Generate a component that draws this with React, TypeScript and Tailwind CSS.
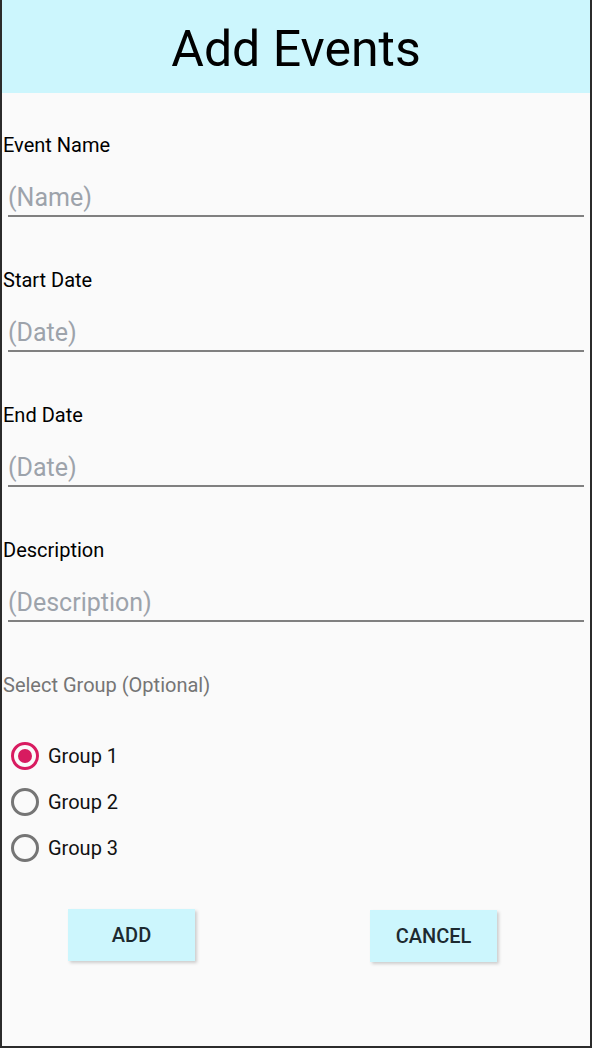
const fields = [
  { label: "Event Name", placeholder: "(Name)" },
  { label: "Start Date", placeholder: "(Date)" },
  { label: "End Date", placeholder: "(Date)" },
  { label: "Description", placeholder: "(Description)" },
];

const groups = ["Group 1", "Group 2", "Group 3"];

export default function App() {
  return (
    <div className="w-[592px] h-[1048px] flex flex-col bg-[#fafafa] border-x-2 border-b-2 border-[#2b2b2b] font-['Roboto',sans-serif] overflow-hidden">
      <div className="h-[93px] shrink-0 bg-[#ccf6fd] flex items-center justify-center">
        <h1 className="text-[50px] leading-none text-black mt-[4px]">Add Events</h1>
      </div>

      <div className="flex flex-col pt-[40px]">
        {fields.map(({ label, placeholder }) => (
          <div key={label} className="flex flex-col h-[135px]">
            <label className="pl-[1px] text-[20px] leading-[24px] text-black">{label}</label>
            <input
              placeholder={placeholder}
              className="mt-[24px] mx-[6px] h-[36px] pb-[2px] text-[25px] leading-[32px] bg-transparent border-b-2 border-[#808080] outline-none placeholder:text-[#9da3ab]"
            />
          </div>
        ))}

        <p className="pl-[1px] text-[20px] leading-[24px] text-[#757575]">Select Group (Optional)</p>

        <div className="flex flex-col mt-[36px]">
          {groups.map((g, i) => (
            <label key={g} className="flex items-center h-[46px] pl-[9px] gap-[9px]">
              <span
                className={
                  i === 0
                    ? "size-[28px] rounded-full border-[3px] border-[#d81b60] flex items-center justify-center"
                    : "size-[28px] rounded-full border-[3px] border-[#757575]"
                }
              >
                {i === 0 && <span className="size-[14px] rounded-full bg-[#d81b60]" />}
              </span>
              <span className="text-[20px] leading-[24px] text-[#111]">{g}</span>
            </label>
          ))}
        </div>

        <div className="flex mt-[38px] pl-[66px] gap-[175px]">
          <button className="w-[127px] h-[52px] bg-[#ccf6fd] shadow-[2px_2px_3px_rgba(0,0,0,0.18)] text-[20px] font-medium text-[#1d2a30]">
            ADD
          </button>
          <button className="w-[127px] h-[52px] mt-[1px] bg-[#ccf6fd] shadow-[2px_2px_3px_rgba(0,0,0,0.18)] text-[20px] font-medium text-[#1d2a30]">
            CANCEL
          </button>
        </div>
      </div>
    </div>
  );
}
